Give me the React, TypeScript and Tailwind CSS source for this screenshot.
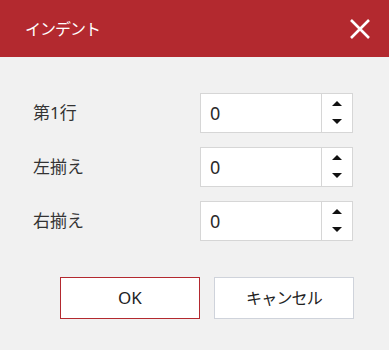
import React from 'react'

const FONT = { fontFamily: '"Noto Sans", "Noto Sans CJK JP", sans-serif' }

const rows = ['第1行', '左揃え', '右揃え']

function Spinner() {
  return (
    <div className="flex w-[31px] flex-col items-center justify-between border-l border-[#d6d6d6] pb-[8px] pt-[7px]">
      <svg width="10" height="5" viewBox="0 0 10 5">
        <path d="M5 0 L10 5 L0 5 Z" fill="#111" />
      </svg>
      <svg width="10" height="5" viewBox="0 0 10 5">
        <path d="M0 0 L10 0 L5 5 Z" fill="#111" />
      </svg>
    </div>
  )
}

export default function App() {
  return (
    <div className="h-[350px] w-[389px] bg-[#f1f1f1]" style={FONT}>
      <header className="flex h-[57px] items-center justify-between bg-[#b3292f] pl-[25px] pr-[18px] text-white">
        <span className="text-[16px] tracking-[-1px]">インデント</span>
        <svg width="22" height="22" viewBox="0 0 22 22">
          <path d="M2 2 L20 20 M20 2 L2 20" stroke="#fff" strokeWidth="2.6" />
        </svg>
      </header>

      <div className="flex flex-col gap-[14px] pt-[36px]">
        {rows.map(label => (
          <div className="flex items-center" key={label}>
            <span className="w-[200px] pl-[33px] text-[17px] text-[#333]">{label}</span>
            <div className="flex h-[40px] w-[153px] border border-[#d6d6d6] bg-white">
              <span className="flex flex-1 items-center pl-[9px] text-[18px] text-[#2a2a2a]">0</span>
              <Spinner />
            </div>
          </div>
        ))}
      </div>

      <div className="mt-[36px] flex gap-[14px] pl-[60px]">
        <button className="h-[42px] w-[140px] border border-[#b3292f] bg-white text-[17px] text-[#222]">
          OK
        </button>
        <button className="h-[42px] w-[140px] border border-[#cfd3db] bg-white text-[16px] tracking-[-0.8px] text-[#222]">
          キャンセル
        </button>
      </div>
    </div>
  )
}
